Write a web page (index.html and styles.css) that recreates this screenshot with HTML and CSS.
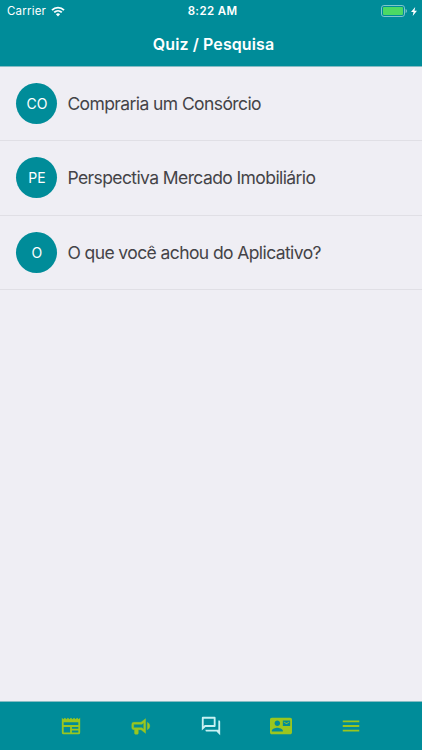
FILE: index.html
```html
<!DOCTYPE html>
<html lang="pt-BR">
<head>
    <meta charset="UTF-8">
    <meta name="viewport" content="width=device-width, initial-scale=1.0">
    <title>Quiz / Pesquisa</title>
    <link rel="stylesheet" href="styles.css">
</head>
<body>
    <header class="header">
        <div class="status-bar">
            <div class="status-left">
                <span class="carrier">Carrier</span>
                <svg class="wifi" viewBox="0 0 14 11">
                    <path d="M1 4.1a8.6 8.6 0 0 1 12 0M3.2 6.4a5.5 5.5 0 0 1 7.6 0" fill="none" stroke="currentColor" stroke-width="1.9"/>
                    <path d="M4.9 8.2a3 3 0 0 1 4.2 0L7 10.5z" fill="currentColor"/>
                </svg>
            </div>
            <div class="time">8:22 AM</div>
            <div class="status-right">
                <svg class="battery" viewBox="0 0 26 12">
                    <rect x=".5" y=".5" width="23" height="11" rx="2.4" fill="none" stroke="#7fc6cc"/>
                    <rect x="2" y="2" width="20" height="8" rx="1" fill="#4cd964"/>
                    <path d="M24.6 4v4c.9-.3 1.3-1 1.3-2s-.4-1.7-1.3-2z" fill="#7fc6cc"/>
                </svg>
                <svg class="bolt" viewBox="0 0 6 9">
                    <path d="M4.2 0L0 5h2.5L1.7 9 6 3.8H3.5z" fill="currentColor"/>
                </svg>
            </div>
        </div>
        <h1 class="title">Quiz / Pesquisa</h1>
    </header>
    <main class="list">
        <a class="item">
            <span class="avatar">CO</span>
            <span class="label">Compraria um Consórcio</span>
        </a>
        <a class="item">
            <span class="avatar">PE</span>
            <span class="label">Perspectiva Mercado Imobiliário</span>
        </a>
        <a class="item">
            <span class="avatar">O</span>
            <span class="label">O que você achou do Aplicativo?</span>
        </a>
    </main>
    <nav class="tab-bar">
        <a class="tab">
            <svg viewBox="0 0 24 24"><path d="M20,11H4V8H20M20,15H13V13H20M20,19H13V17H20M11,19H4V13H11M20.33,4.67L18.67,3L17,4.67L15.33,3L13.67,4.67L12,3L10.33,4.67L8.67,3L7,4.67L5.33,3L3.67,4.67L2,3V19A2,2 0 0,0 4,21H20A2,2 0 0,0 22,19V3L20.33,4.67Z"/></svg>
        </a>
        <a class="tab">
            <svg viewBox="0 0 24 24"><path d="M12,8H4A2,2 0 0,0 2,10V14A2,2 0 0,0 4,16H5V20A1,1 0 0,0 6,21H8A1,1 0 0,0 9,20V16H12L17,20V4L12,8M15,15.6L13,14H4V10H13L15,8.4V15.6M21.5,12C21.5,13.71 20.54,15.26 19,16V8C20.53,8.75 21.5,10.3 21.5,12Z" stroke="currentColor" stroke-width=".5"/></svg>
        </a>
        <a class="tab active">
            <svg viewBox="0 0 24 24"><path d="M15,4V11H5.17L4,12.17V4H15M16,2H3A1,1 0 0,0 2,3V17L6,13H16A1,1 0 0,0 17,12V3A1,1 0 0,0 16,2M21,6H20V16H6V17A1,1 0 0,0 7,18H18L22,22V7A1,1 0 0,0 21,6Z"/></svg>
        </a>
        <a class="tab">
            <svg viewBox="0 0 24 24"><path d="M21 8V7l-3 2-3-2v1l3 2 3-2zm1-5H2C.9 3 0 3.9 0 5v14c0 1.1.9 2 2 2h20c1.1 0 1.99-.9 1.99-2L24 5c0-1.1-.9-2-2-2zM8 6c1.66 0 3 1.34 3 3s-1.34 3-3 3-3-1.34-3-3 1.34-3 3-3zm6 12H2v-1c0-2 4-3.1 6-3.1s6 1.1 6 3.1v1zm8-6h-8V6h8v6z"/></svg>
        </a>
        <a class="tab">
            <svg viewBox="0 0 24 24"><path d="M3,6H21V8H3V6M3,11H21V13H3V11M3,16H21V18H3V16Z"/></svg>
        </a>
    </nav>
</body>
</html>
```
FILE: styles.css
```css
:root {
    --teal: #008c99;
    --green: #9ac61f;
    --bg-color: #efeef4;
    --text-color: #444347;
    --line-color: #e0dfe5;
}
body {
    font-family: Inter, "Liberation Sans", sans-serif;
    margin: 0;
    height: 750px;
    display: flex;
    flex-direction: column;
    background: var(--bg-color);
    color: var(--text-color);
    overflow: hidden;
}
.header {
    box-sizing: border-box;
    height: 67px;
    background: var(--teal);
    border-bottom: 1px solid #86bcc4;
    color: white;
}
.status-bar {
    display: grid;
    grid-template-columns: 1fr auto 1fr;
    align-items: center;
    height: 22px;
    padding: 0 5px 0 7px;
    font-size: 11.5px;
}
.status-left {
    display: flex;
    align-items: center;
    gap: 5px;
}
.carrier {
    letter-spacing: 0.2px;
}
.wifi {
    width: 14px;
    height: 11px;
}
.time {
    padding-left: 1px;
    font-weight: 600;
    letter-spacing: 0.35px;
}
.status-right {
    display: flex;
    align-items: center;
    justify-content: flex-end;
    gap: 4px;
}
.battery {
    width: 26px;
    height: 12px;
}
.bolt {
    width: 6px;
    height: 9px;
}
.title {
    margin: 0;
    padding-left: 5px;
    font-size: 16px;
    font-weight: 600;
    letter-spacing: 0.1px;
    line-height: 44px;
    text-align: center;
}
.list {
    flex: 1;
}
.item {
    box-sizing: border-box;
    display: flex;
    align-items: center;
    gap: 10px;
    height: 74.3px;
    padding-left: 16.4px;
    border-bottom: 1px solid var(--line-color);
}
.avatar {
    display: flex;
    align-items: center;
    justify-content: center;
    width: 41px;
    height: 41px;
    border-radius: 50%;
    background: var(--teal);
    color: white;
    font-size: 14px;
}
.label {
    font-size: 17.5px;
    letter-spacing: -0.59px;
}
.tab-bar {
    box-sizing: border-box;
    display: flex;
    justify-content: center;
    align-items: center;
    height: 49px;
    background: var(--teal);
    border-top: 1px solid #86bcc4;
}
.tab {
    display: flex;
    justify-content: center;
    width: 70px;
    color: var(--green);
}
.tab.active {
    color: #c8f1f3;
}
.tab svg {
    width: 22px;
    height: 22px;
    fill: currentColor;
}
```
